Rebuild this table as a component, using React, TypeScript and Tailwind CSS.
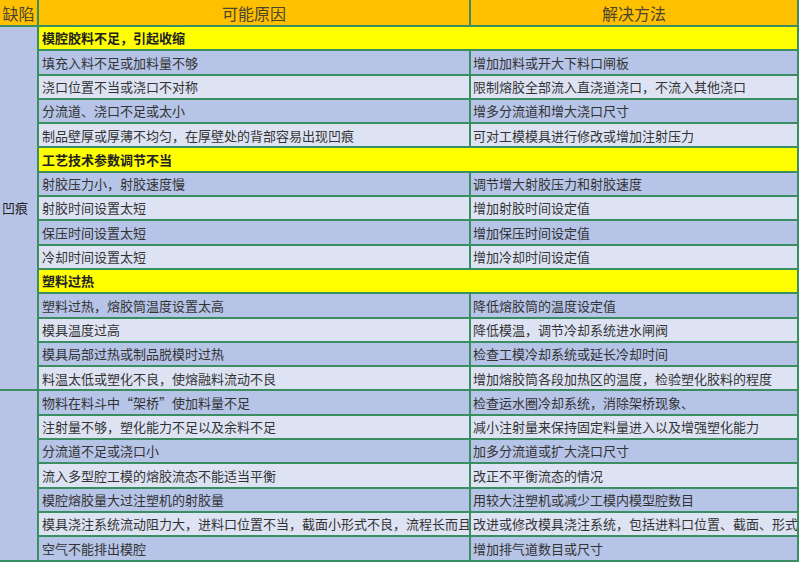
import React from "react";

type Row = { y: string } | { a: string; b: string };

const group1: Row[] = [
  { y: "模腔胶料不足，引起收缩" },
  { a: "填充入料不足或加料量不够", b: "增加加料或开大下料口闸板" },
  { a: "浇口位置不当或浇口不对称", b: "限制熔胶全部流入直浇道浇口，不流入其他浇口" },
  { a: "分流道、浇口不足或太小", b: "增多分流道和增大浇口尺寸" },
  { a: "制品壁厚或厚薄不均匀，在厚壁处的背部容易出现凹痕", b: "可对工模模具进行修改或增加注射压力" },
  { y: "工艺技术参数调节不当" },
  { a: "射胶压力小，射胶速度慢", b: "调节增大射胶压力和射胶速度" },
  { a: "射胶时间设置太短", b: "增加射胶时间设定值" },
  { a: "保压时间设置太短", b: "增加保压时间设定值" },
  { a: "冷却时间设置太短", b: "增加冷却时间设定值" },
  { y: "塑料过热" },
  { a: "塑料过热，熔胶筒温度设置太高", b: "降低熔胶筒的温度设定值" },
  { a: "模具温度过高", b: "降低模温，调节冷却系统进水闸阀" },
  { a: "模具局部过热或制品脱模时过热", b: "检查工模冷却系统或延长冷却时间" },
  { a: "料温太低或塑化不良，使熔融料流动不良", b: "增加熔胶筒各段加热区的温度，检验塑化胶料的程度" },
];

const group2: Row[] = [
  { a: "物料在料斗中“架桥”使加料量不足", b: "检查运水圈冷却系统，消除架桥现象、" },
  { a: "注射量不够，塑化能力不足以及余料不足", b: "减小注射量来保持固定料量进入以及增强塑化能力" },
  { a: "分流道不足或浇口小", b: "加多分流道或扩大浇口尺寸" },
  { a: "流入多型腔工模的熔胶流态不能适当平衡", b: "改正不平衡流态的情况" },
  { a: "模腔熔胶量大过注塑机的射胶量", b: "用较大注塑机或减少工模内模型腔数目" },
  { a: "模具浇注系统流动阻力大，进料口位置不当，截面小形式不良，流程长而且", b: "改进或修改模具浇注系统，包括进料口位置、截面、形式" },
  { a: "空气不能排出模腔", b: "增加排气道数目或尺寸" },
];

const font = { fontFamily: '"Noto Sans CJK SC", "Noto Sans", sans-serif' };

function renderRows(rows: Row[], startIdx: number) {
  let idx = startIdx;
  const out: React.ReactNode[] = [];
  rows.forEach((r, i) => {
    if ("y" in r) {
      out.push(
        <div
          key={"y" + i}
          className="col-span-2 bg-[#ffff00] pl-[3px] flex items-center text-[13px] font-bold text-[#222] whitespace-nowrap overflow-hidden"
        >
          {r.y}
        </div>
      );
    } else {
      const dark = idx % 2 === 0;
      idx++;
      const bg = dark ? "bg-[#b6c4e7]" : "bg-[#dde3f3]";
      out.push(
        <div
          key={"a" + i}
          className={`${bg} pl-[3px] flex items-center text-[13px] text-[#333] whitespace-nowrap overflow-hidden`}
        >
          {r.a}
        </div>,
        <div
          key={"b" + i}
          className={`${bg} pl-[2px] flex items-center text-[13px] text-[#333] whitespace-nowrap overflow-hidden`}
        >
          {r.b}
        </div>
      );
    }
  });
  return { nodes: out, next: idx };
}

export default function App() {
  const g1 = renderRows(group1, 0);
  const g2 = renderRows(group2, g1.next);
  return (
    <div className="w-[800px] h-[566px] bg-white overflow-hidden" style={font}>
      <div className="grid w-fit grid-cols-[37px_430px_326px] grid-rows-[25px_repeat(22,22.3px)] gap-[2px] bg-[#3a8f62] pr-[2px] pb-[2px]">
        <div className="bg-[#ffc000] flex items-center justify-center text-[16px] text-[#4b4530]">缺陷</div>
        <div className="bg-[#ffc000] flex items-center justify-center text-[16px] text-[#4b4530]">可能原因</div>
        <div className="bg-[#ffc000] flex items-center justify-center text-[16px] text-[#4b4530]">解决方法</div>
        <div className="row-span-[15] bg-[#b8c4e7] flex items-center pl-[2px] text-[13px] text-[#222]">凹痕</div>
        {g1.nodes}
        <div className="row-span-7 bg-[#b8c4e7]"></div>
        {g2.nodes}
      </div>
    </div>
  );
}
